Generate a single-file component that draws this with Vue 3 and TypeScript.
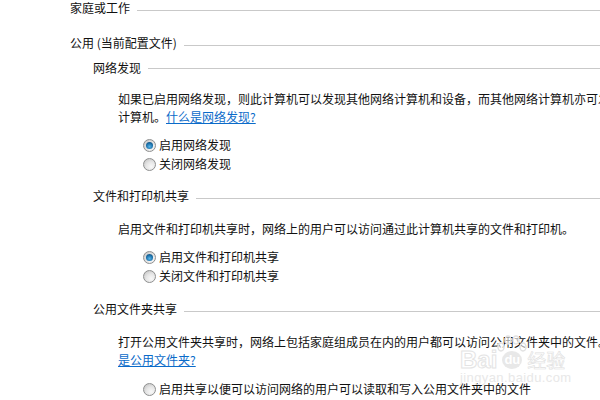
<script setup lang="ts">
interface Radio { label: string; on: boolean }
interface Section {
  title: string
  line: string
  rest?: string
  link?: string
  radios: Radio[]
  cls: string
}
const sections: Section[] = [
  {
    title: '网络发现',
    line: '如果已启用网络发现，则此计算机可以发现其他网络计算机和设备，而其他网络计算机亦可发现此',
    rest: '计算机。',
    link: '什么是网络发现?',
    radios: [
      { label: '启用网络发现', on: true },
      { label: '关闭网络发现', on: false },
    ],
    cls: 'first',
  },
  {
    title: '文件和打印机共享',
    line: '启用文件和打印机共享时，网络上的用户可以访问通过此计算机共享的文件和打印机。',
    radios: [
      { label: '启用文件和打印机共享', on: true },
      { label: '关闭文件和打印机共享', on: false },
    ],
    cls: 'second',
  },
  {
    title: '公用文件夹共享',
    line: '打开公用文件夹共享时，网络上包括家庭组成员在内的用户都可以访问公用文件夹中的文件。什么',
    link: '是公用文件夹?',
    rest: '',
    radios: [{ label: '启用共享以便可以访问网络的用户可以读取和写入公用文件夹中的文件', on: false }],
    cls: 'third',
  },
]
</script>

<template>
  <div class="page">
    <div class="heading"><span>家庭或工作</span><i class="rule"></i></div>
    <div class="heading public"><span>公用 (当前配置文件)</span><i class="rule"></i></div>
    <section v-for="s in sections" :key="s.title" class="section" :class="s.cls">
      <div class="heading"><span>{{ s.title }}</span><i class="rule"></i></div>
      <div class="para">
        <div class="line">{{ s.line }}</div>
        <div v-if="s.link" class="line">{{ s.rest }}<a href="#" class="link">{{ s.link }}</a></div>
      </div>
      <div class="radios">
        <div v-for="r in s.radios" :key="r.label" class="radio-row">
          <span class="radio" :class="{ on: r.on }"><b v-if="r.on"></b></span>
          <span>{{ r.label }}</span>
        </div>
      </div>
    </section>
    <div class="mark" aria-hidden="true">
      <svg class="paw" width="30" height="18" viewBox="0 0 30 18">
        <g fill="#fff" fill-opacity="0.6" stroke="#e2e2e2" stroke-width="1.5">
          <ellipse cx="4" cy="12" rx="3" ry="4" />
          <ellipse cx="11" cy="5" rx="3" ry="4" />
          <ellipse cx="19" cy="5" rx="3" ry="4" />
          <ellipse cx="26" cy="12" rx="3" ry="4" />
        </g>
      </svg>
      <div class="mark-main"><span class="bai">Bai</span><span class="du">du</span><span class="jy">经验</span></div>
      <div class="mark-url">jingyan.baidu.com</div>
    </div>
  </div>
</template>

<style scoped>
.page {
  position: relative;
  width: 600px;
  height: 400px;
  overflow: hidden;
  background: #fff;
  box-sizing: border-box;
  padding-left: 70px;
  font: 12px/18px "Noto Sans CJK SC", "Liberation Sans", sans-serif;
  color: #111;
  white-space: nowrap;
}
.heading {
  display: flex;
  align-items: center;
  gap: 7px;
  height: 20px;
}
.heading span {
  position: relative;
  top: -2px;
}
.public { margin-top: 15px; }
.rule {
  flex: 1;
  height: 1px;
  background: #c9c9c9;
}
.section { padding-left: 23px; }
.first { margin-top: 3px; }
.first .heading span { top: 0; }
.second { margin-top: 15px; }
.third { margin-top: 16px; }
.para {
  margin-top: 12px;
  padding-left: 25px;
}
.line { height: 18px; }
.link {
  color: #0b6bc9;
  text-decoration: underline;
}
.radios {
  margin-top: 9px;
  padding-left: 50px;
}
.third .radios { margin-top: 10px; }
.radio-row {
  display: flex;
  align-items: center;
  gap: 3px;
  height: 19px;
}
.radio {
  width: 13px;
  height: 13px;
  box-sizing: border-box;
  margin-top: 2px;
  border: 1px solid #8e8f8f;
  border-radius: 50%;
  background: radial-gradient(circle at 65% 70%, #f8f8f8 0, #e6e6e6 45%, #bdbdbd 100%);
  display: flex;
  align-items: center;
  justify-content: center;
}
.radio b {
  width: 7px;
  height: 7px;
  border-radius: 50%;
  background: radial-gradient(circle at 50% 65%, #57b6ea 0, #1b6fa8 55%, #0d3f66 100%);
}
.mark {
  position: absolute;
  left: 460px;
  top: 335px;
  width: 112px;
}
.paw {
  position: absolute;
  left: 37px;
  top: 0;
}
.mark-main {
  display: flex;
  align-items: center;
  height: 30px;
  margin-top: 10px;
}
.bai {
  font: bold 24px/30px "Liberation Sans", sans-serif;
  color: rgba(255, 255, 255, 0.85);
  -webkit-text-stroke: 1px #e4e4e4;
}
.du {
  width: 20px;
  height: 18px;
  margin-left: 5px;
  border-radius: 50%;
  background: rgba(228, 228, 228, 0.85);
  color: #fff;
  font: bold 13px/18px "Liberation Sans", sans-serif;
  text-align: center;
}
.jy {
  margin-left: 5px;
  font: 19px/30px "Noto Sans CJK SC", sans-serif;
  color: rgba(255, 255, 255, 0.85);
  -webkit-text-stroke: 0.6px #e0e0e0;
}
.mark-url {
  margin-top: -3px;
  font: 13px/12px "Liberation Sans", sans-serif;
  letter-spacing: 0.4px;
  color: #e8e8e8;
}
</style>
